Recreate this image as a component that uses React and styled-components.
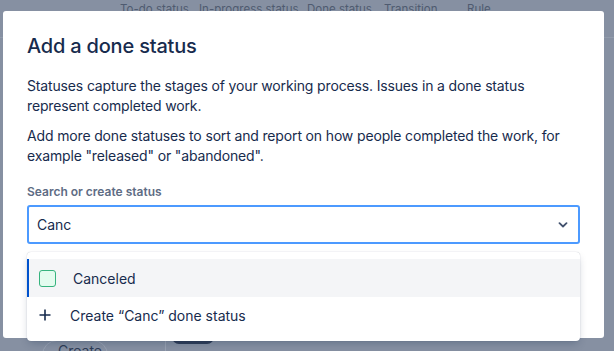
import React from "react";
import styled, { createGlobalStyle } from "styled-components";

const Global = createGlobalStyle`
  html, body {
    margin: 0;
    padding: 0;
    width: 614px;
    height: 351px;
    overflow: hidden;
    font-family: Inter, "Noto Sans", sans-serif;
  }
`;

const Page = styled.div`
  position: relative;
  width: 614px;
  height: 351px;
  background: #8690a2;
  overflow: hidden;
`;

const HeaderRow = styled.div`
  display: flex;
  height: 38px;
  border-bottom: 1px solid #919bab;
  padding-left: 120px;
  box-sizing: border-box;
`;

const HeaderCell = styled.span`
  font-size: 11.5px;
  color: #4f5b70;
  line-height: 13px;
  padding-top: 3px;
  white-space: nowrap;
  width: ${(p) => p.w}px;
`;

const Footer = styled.div`
  position: absolute;
  left: 42px;
  top: 340px;
  display: flex;
  align-items: flex-start;
`;

const CreateButton = styled.div`
  display: flex;
  align-items: center;
  gap: 6px;
  height: 30px;
  padding: 0 6px 8px 9px;
  border: 1px solid #98a1b1;
  border-radius: 16px;
  box-sizing: border-box;
  width: 66px;
  font-size: 14px;
  line-height: 14px;
  color: #2f3d57;
`;

const Meta = styled.span`
  margin: 8px 0 0 2px;
  width: 55px;
  font-size: 13px;
  font-weight: 700;
  color: #2f3d57;
`;

const Divider = styled.div`
  width: 1px;
  height: 30px;
  background: #98a1b1;
`;

const DarkPill = styled.div`
  width: 42px;
  height: 12px;
  margin: -8px 0 0 6px;
  border-radius: 0 0 7px 7px;
  background: #2f3d57;
`;

const Modal = styled.div`
  position: absolute;
  left: 3px;
  top: 11px;
  width: 601px;
  height: 327px;
  background: #ffffff;
  border-radius: 3px;
  box-sizing: border-box;
  padding: 23px 24px 0 24px;
  color: #172b4d;
`;

const Title = styled.h1`
  margin: 0 0 18px 0;
  font-size: 20px;
  font-weight: 500;
  line-height: 24px;
  letter-spacing: -0.2px;
  color: #172b4d;
`;

const Text = styled.p`
  margin: 0 0 ${(p) => p.mb}px 0;
  font-size: 14px;
  line-height: 20px;
  letter-spacing: -0.15px;
  color: #172b4d;
  max-width: 540px;
`;

const Label = styled.label`
  display: block;
  margin-top: 18px;
  font-size: 12px;
  font-weight: 600;
  line-height: 16px;
  color: #5e6c84;
`;

const Field = styled.div`
  position: relative;
  margin-top: 5px;
`;

const Input = styled.div`
  display: flex;
  align-items: center;
  justify-content: space-between;
  height: 39px;
  box-sizing: border-box;
  border: 2px solid #4c9aff;
  border-radius: 3px;
  padding: 0 10px 0 8px;
  font-size: 14px;
  color: #172b4d;
`;

const Helper = styled.div`
  margin-top: 7px;
  font-size: 12px;
  color: #b0b8c4;
`;

const Menu = styled.div`
  position: absolute;
  left: 0;
  right: 0;
  top: 47px;
  padding: 7px 0 8px;
  background: #ffffff;
  border-radius: 4px;
  box-shadow: 0 4px 8px -2px rgba(9, 30, 66, 0.25), 0 0 1px rgba(9, 30, 66, 0.31);
`;

const Option = styled.div`
  display: flex;
  align-items: center;
  height: ${(p) => (p.active ? 38 : 36)}px;
  box-sizing: border-box;
  padding-left: ${(p) => (p.active ? 10 : 12)}px;
  gap: ${(p) => p.gap}px;
  background: ${(p) => (p.active ? "#f4f5f7" : "transparent")};
  border-left: ${(p) => (p.active ? "2px solid #0052cc" : "none")};
  font-size: 14px;
  color: #172b4d;
`;

const StatusBox = styled.span`
  width: 17px;
  height: 17px;
  box-sizing: border-box;
  border: 1px solid #36b37e;
  border-radius: 3px;
  background: #e3fcef;
`;

const Chevron = () => (
  <svg width="10" height="6" viewBox="0 0 10 6">
    <path d="M1.5 1.2 L5 4.5 L8.5 1.2" fill="none" stroke="#42526e" strokeWidth="1.8" strokeLinecap="round" strokeLinejoin="round" />
  </svg>
);

const Plus = () => (
  <svg width="12" height="12" viewBox="0 0 12 12">
    <path d="M6 0.5 V11.5 M0.5 6 H11.5" stroke="#172b4d" strokeWidth="1.6" />
  </svg>
);

const Bolt = () => (
  <svg width="8" height="12" viewBox="0 0 8 12">
    <path d="M5 0 L0.5 7 H3.5 L2.5 12 L7.5 4.5 H4.5 Z" fill="#2f3d57" />
  </svg>
);

export default function App() {
  return (
    <>
      <Global />
      <Page>
        <HeaderRow>
          <HeaderCell w={79}>To-do status</HeaderCell>
          <HeaderCell w={108}>In-progress status</HeaderCell>
          <HeaderCell w={77}>Done status</HeaderCell>
          <HeaderCell w={83}>Transition</HeaderCell>
          <HeaderCell w={40}>Rule</HeaderCell>
        </HeaderRow>
        <Footer>
          <CreateButton>
            <Bolt />
            Create
          </CreateButton>
          <Meta>ul 00</Meta>
          <Divider />
          <DarkPill />
        </Footer>
        <Modal>
          <Title>Add a done status</Title>
          <Text mb={10}>
            Statuses capture the stages of your working process. Issues in a done status represent
            completed work.
          </Text>
          <Text mb={0}>
            Add more done statuses to sort and report on how people completed the work, for example
            "released" or "abandoned".
          </Text>
          <Label>Search or create status</Label>
          <Field>
            <Input>
              <span>Canc</span>
              <Chevron />
            </Input>
            <Helper>Select an existing status or create a new one.</Helper>
            <Menu>
              <Option active gap={17}>
                <StatusBox />
                Canceled
              </Option>
              <Option gap={19}>
                <Plus />
                Create “Canc” done status
              </Option>
            </Menu>
          </Field>
        </Modal>
      </Page>
    </>
  );
}
